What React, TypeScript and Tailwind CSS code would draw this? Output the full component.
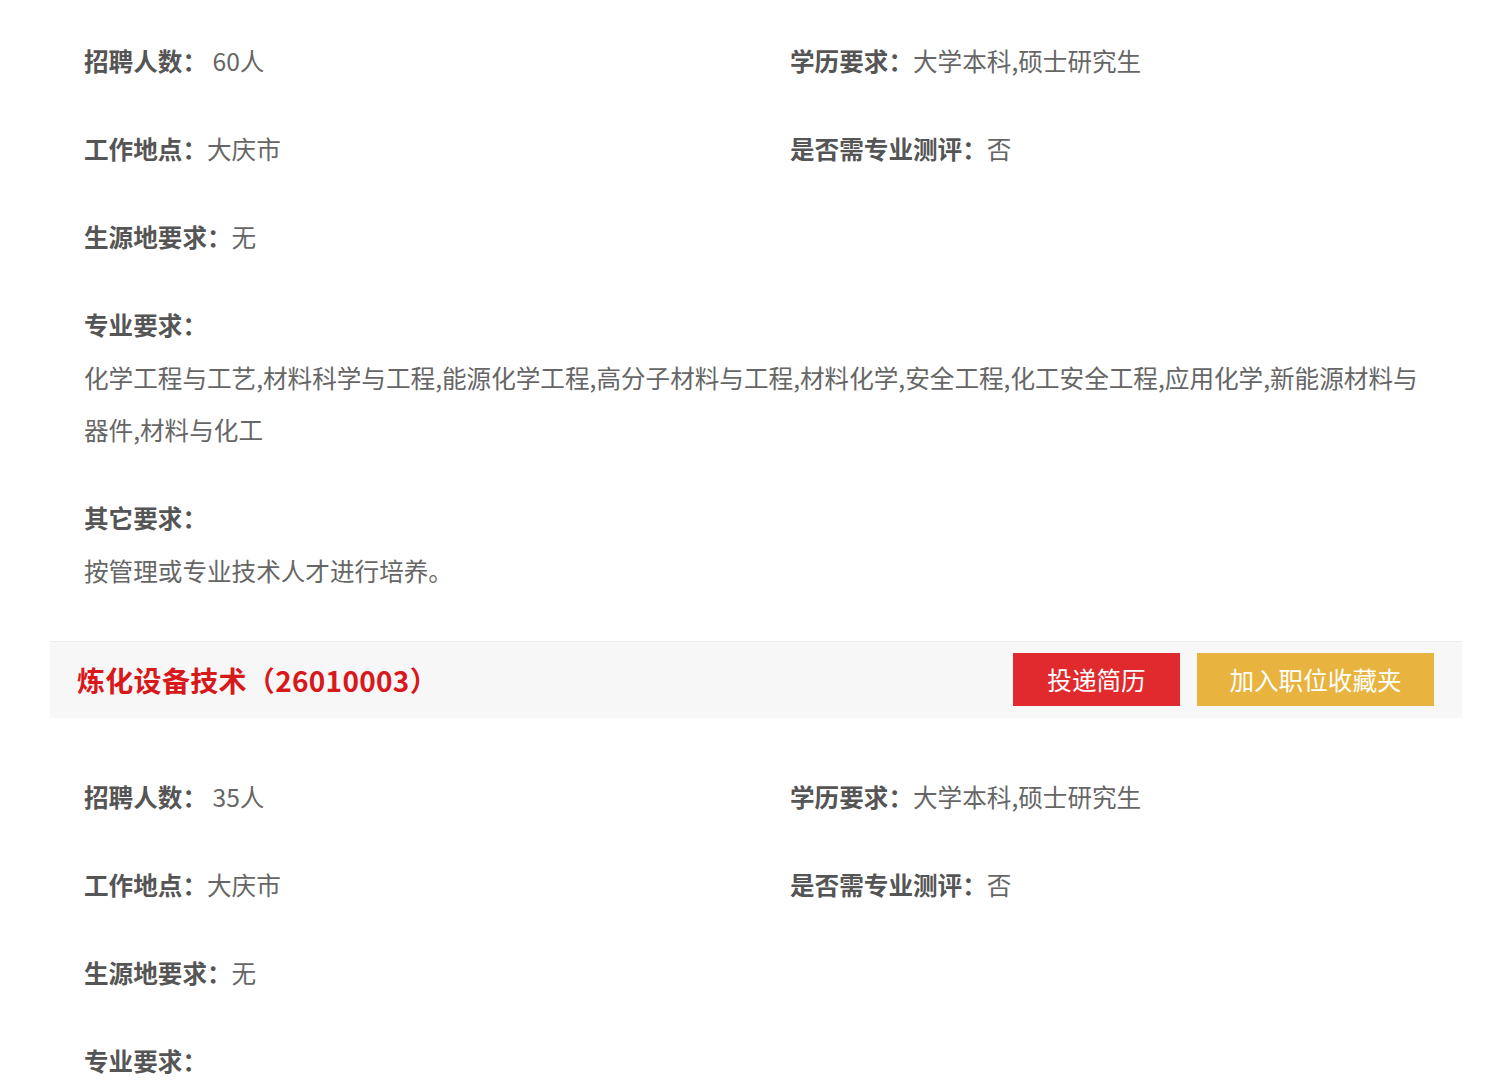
const font = "font-['Microsoft_YaHei','Noto_Sans_CJK_SC',sans-serif]";

interface Job {
    count: string;
    degree: string;
    place: string;
    evaluation: string;
    origin: string;
    major?: string;
    other?: string;
}

function Field({ label, value }: { label: string; value: string }) {
    return (
        <div className="pl-[34px] mb-[35.5px] leading-[52.5px] text-[24.6px] text-[#666]">
            <span className="font-bold text-[#555]">{label}：</span>
            {value}
        </div>
    );
}

function JobDetail({ job, first }: { job: Job; first?: boolean }) {
    return (
        <div className={first ? 'pt-[34px] pb-[9px]' : 'pt-[52px]'}>
            <div className="grid grid-cols-2">
                <Field label="招聘人数" value={'\u00a0' + job.count} />
                <Field label="学历要求" value={job.degree} />
                <Field label="工作地点" value={job.place} />
                <Field label="是否需专业测评" value={job.evaluation} />
                <Field label="生源地要求" value={job.origin} />
                <div />
            </div>
            <div className="px-[34px] mb-[35.5px] leading-[52.5px] text-[24.6px] text-[#666]">
                <div className="font-bold text-[#555]">专业要求：</div>
                {job.major && <div>{job.major}</div>}
            </div>
            {job.other && (
                <div className="px-[34px] mb-[35.5px] leading-[52.5px] text-[24.6px] text-[#666]">
                    <div className="font-bold text-[#555]">其它要求：</div>
                    <div>{job.other}</div>
                </div>
            )}
        </div>
    );
}

function JobHeader({ title, code }: { title: string; code: string }) {
    return (
        <div className="flex items-center justify-between h-[77px] bg-[#f7f7f7] border-t border-[#ececec] pl-[27px] pr-[28px]">
            <h2 className="text-[28px] font-bold text-[#d8191c] tracking-[0.3px]">
                {title}（{code}）
            </h2>
            <div className="flex gap-[17px]">
                <button className="h-[53px] w-[167px] text-center bg-[#e02a2d] text-white text-[24.6px]">投递简历</button>
                <button className="h-[53px] w-[237px] text-center bg-[#e8b33e] text-white text-[24.6px]">加入职位收藏夹</button>
            </div>
        </div>
    );
}

export default function App() {
    const jobA: Job = {
        count: '60人',
        degree: '大学本科,硕士研究生',
        place: '大庆市',
        evaluation: '否',
        origin: '无',
        major: '化学工程与工艺,材料科学与工程,能源化学工程,高分子材料与工程,材料化学,安全工程,化工安全工程,应用化学,新能源材料与器件,材料与化工',
        other: '按管理或专业技术人才进行培养。',
    };
    const jobB: Job = {
        count: '35人',
        degree: '大学本科,硕士研究生',
        place: '大庆市',
        evaluation: '否',
        origin: '无',
    };

    return (
        <div className={`w-full h-[1080px] overflow-hidden bg-white ${font}`}>
            <div className="ml-[50px] w-[1412px]">
                <JobDetail job={jobA} first />
                <JobHeader title="炼化设备技术" code="26010003" />
                <JobDetail job={jobB} />
            </div>
        </div>
    );
}
